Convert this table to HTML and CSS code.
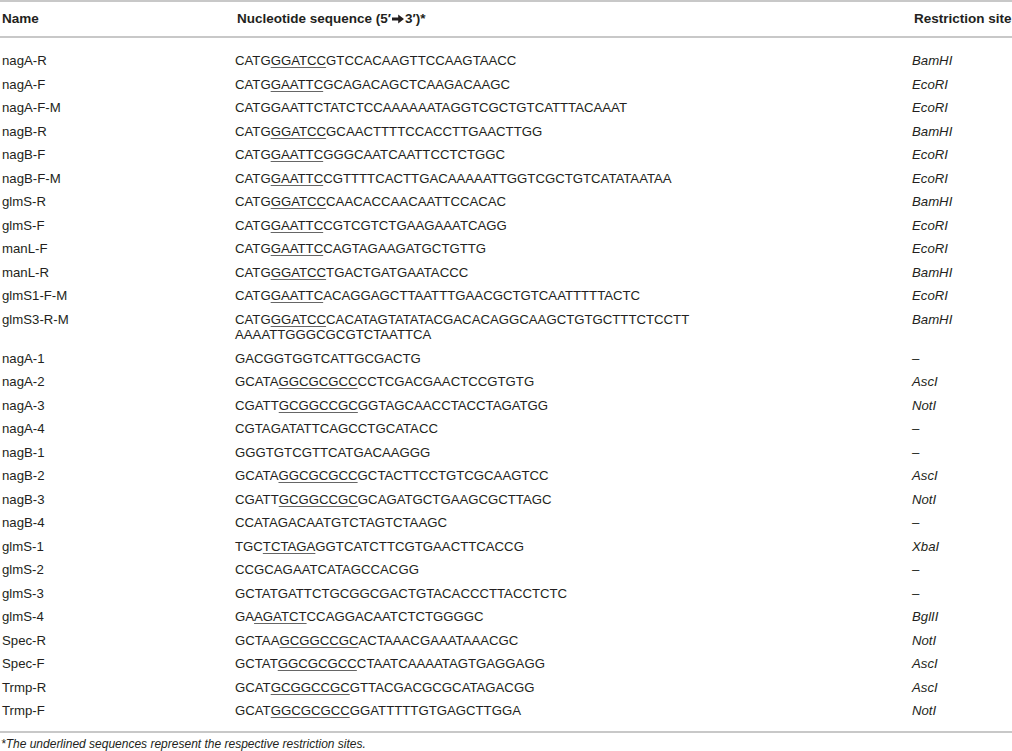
FILE: index.html
```html
<!DOCTYPE html>
<html lang="en">
<head>
    <meta charset="UTF-8">
    <title>Primers</title>
    <link rel="stylesheet" href="styles.css">
</head>
<body>

    <table class="primers">
        <thead>
            <tr>
                <th class="col-name">Name</th>
                <th class="col-seq">Nucleotide sequence (5′<svg class="arrow" viewBox="0 0 12 10" width="12" height="10"><path d="M0 3.6h6.2V0.6L12 5 6.2 9.4V6.4H0z"/></svg>3′)*</th>
                <th class="col-site">Restriction site</th>
            </tr>
        </thead>
        <tbody>
            <tr><td>nagA-R</td><td>CATG<u>GGATCC</u>GTCCACAAGTTCCAAGTAACC</td><td><i>BamHI</i></td></tr>
            <tr><td>nagA-F</td><td>CATG<u>GAATTC</u>GCAGACAGCTCAAGACAAGC</td><td><i>EcoRI</i></td></tr>
            <tr><td>nagA-F-M</td><td>CATGGAATTCTATCTCCAAAAAATAGGTCGCTGTCATTTACAAAT</td><td><i>EcoRI</i></td></tr>
            <tr><td>nagB-R</td><td>CATG<u>GGATCC</u>GCAACTTTTCCACCTTGAACTTGG</td><td><i>BamHI</i></td></tr>
            <tr><td>nagB-F</td><td>CATG<u>GAATTC</u>GGGCAATCAATTCCTCTGGC</td><td><i>EcoRI</i></td></tr>
            <tr><td>nagB-F-M</td><td>CATG<u>GAATTC</u>CGTTTTCACTTGACAAAAATTGGTCGCTGTCATATAATAA</td><td><i>EcoRI</i></td></tr>
            <tr><td>glmS-R</td><td>CATG<u>GGATCC</u>CAACACCAACAATTCCACAC</td><td><i>BamHI</i></td></tr>
            <tr><td>glmS-F</td><td>CATG<u>GAATTC</u>CGTCGTCTGAAGAAATCAGG</td><td><i>EcoRI</i></td></tr>
            <tr><td>manL-F</td><td>CATG<u>GAATTC</u>CAGTAGAAGATGCTGTTG</td><td><i>EcoRI</i></td></tr>
            <tr><td>manL-R</td><td>CATG<u>GGATCC</u>TGACTGATGAATACCC</td><td><i>BamHI</i></td></tr>
            <tr><td>glmS1-F-M</td><td>CATG<u>GAATTC</u>ACAGGAGCTTAATTTGAACGCTGTCAATTTTTACTC</td><td><i>EcoRI</i></td></tr>
            <tr><td>glmS3-R-M</td><td>CATG<u>GGATCC</u>CACATAGTATATACGACACAGGCAAGCTGTGCTTTCTCCTT<br>AAAATTGGGCGCGTCTAATTCA</td><td><i>BamHI</i></td></tr>
            <tr><td>nagA-1</td><td>GACGGTGGTCATTGCGACTG</td><td>–</td></tr>
            <tr><td>nagA-2</td><td>GCATA<u>GGCGCGCC</u>CCTCGACGAACTCCGTGTG</td><td><i>AscI</i></td></tr>
            <tr><td>nagA-3</td><td>CGATT<u>GCGGCCGC</u>GGTAGCAACCTACCTAGATGG</td><td><i>NotI</i></td></tr>
            <tr><td>nagA-4</td><td>CGTAGATATTCAGCCTGCATACC</td><td>–</td></tr>
            <tr><td>nagB-1</td><td>GGGTGTCGTTCATGACAAGGG</td><td>–</td></tr>
            <tr><td>nagB-2</td><td>GCATA<u>GGCGCGCC</u>GCTACTTCCTGTCGCAAGTCC</td><td><i>AscI</i></td></tr>
            <tr><td>nagB-3</td><td>CGATT<u>GCGGCCGC</u>GCAGATGCTGAAGCGCTTAGC</td><td><i>NotI</i></td></tr>
            <tr><td>nagB-4</td><td>CCATAGACAATGTCTAGTCTAAGC</td><td>–</td></tr>
            <tr><td>glmS-1</td><td>TGC<u>TCTAGA</u>GGTCATCTTCGTGAACTTCACCG</td><td><i>XbaI</i></td></tr>
            <tr><td>glmS-2</td><td>CCGCAGAATCATAGCCACGG</td><td>–</td></tr>
            <tr><td>glmS-3</td><td>GCTATGATTCTGCGGCGACTGTACACCCTTACCTCTC</td><td>–</td></tr>
            <tr><td>glmS-4</td><td>GA<u>AGATCT</u>CCAGGACAATCTCTGGGGC</td><td><i>BglII</i></td></tr>
            <tr><td>Spec-R</td><td>GCTAA<u>GCGGCCGC</u>ACTAAACGAAATAAACGC</td><td><i>NotI</i></td></tr>
            <tr><td>Spec-F</td><td>GCTAT<u>GGCGCGCC</u>CTAATCAAAATAGTGAGGAGG</td><td><i>AscI</i></td></tr>
            <tr><td>Trmp-R</td><td>GCAT<u>GCGGCCGC</u>GTTACGACGCGCATAGACGG</td><td><i>AscI</i></td></tr>
            <tr><td>Trmp-F</td><td>GCAT<u>GGCGCGCC</u>GGATTTTTGTGAGCTTGGA</td><td><i>NotI</i></td></tr>
        </tbody>
    </table>

    <p class="footnote">*The underlined sequences represent the respective restriction sites.</p>

</body>
</html>
```

FILE: styles.css
```css
* {
    margin: 0;
    padding: 0;
    box-sizing: border-box;
}
body {
    background: white;
    color: #231f20;
    font-family: 'Liberation Sans', Arial, sans-serif;
    font-size: 13.2px;
}
.primers {
    width: 100%;
    border-collapse: collapse;
    table-layout: fixed;
}
.primers thead tr {
    border-top: 2px solid #c8c8c8;
    border-bottom: 2px solid #c8c8c8;
}
.primers th {
    text-align: left;
    font-weight: bold;
    font-size: 13.5px;
    line-height: 16px;
    padding: 9px 0 9px 2px;
    white-space: nowrap;
}
.col-name {
    width: 235px;
}
.col-site {
    width: 100px;
}
.arrow {
    fill: currentColor;
    margin: 0 1px;
    vertical-align: -0.5px;
}
.primers td {
    vertical-align: top;
    line-height: 15.5px;
    padding: 4px 0 4px 2px;
    white-space: nowrap;
}
.primers td:nth-child(2),
.primers td:nth-child(3) {
    padding-left: 0;
}
.primers tbody tr:first-child td {
    padding-top: 15px;
}
.primers tbody tr:last-child td {
    padding-bottom: 12px;
}
.primers tbody tr:last-child {
    border-bottom: 2px solid #c8c8c8;
}
.primers u {
    text-decoration-color: #666;
    text-underline-offset: 2px;
}
.footnote {
    font-size: 12px;
    font-style: italic;
    line-height: 14px;
    padding: 4px 0 0 1px;
}
```
